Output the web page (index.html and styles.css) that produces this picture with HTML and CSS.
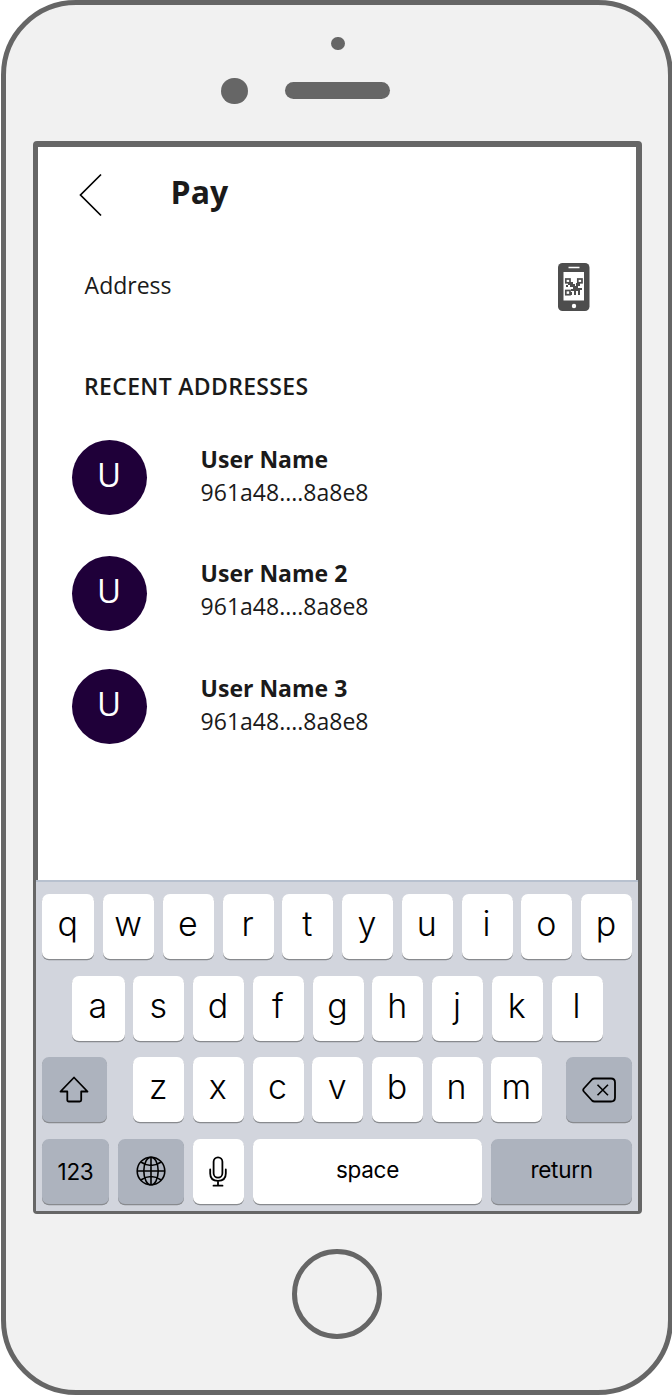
FILE: index.html
```html
<!DOCTYPE html>
<html lang="en">
<head>
<meta charset="utf-8">
<title>Pay</title>
<link rel="stylesheet" href="styles.css">
</head>
<body>
<div class="phone">
  <div class="bezel">
    <div class="sensor"></div>
    <div class="speaker-row"><span class="camera"></span><span class="speaker"></span></div>
  </div>
  <div class="screen">
    <main class="app">
      <header class="header">
        <svg class="back" width="24" height="44" viewBox="0 0 24 44" fill="none" stroke="#000" stroke-width="1.7"><path d="M23 1.500L2.500 22l20.500 20.500"/></svg>
        <h1 class="title">Pay</h1>
      </header>
      <div class="address">
        <span class="address-label">Address</span>
        <svg class="qr" width="32" height="48" viewBox="0 0 32 48">
          <rect width="31.500" height="48" rx="4.500" fill="#4d4d4d"/>
          <rect x="5.500" y="9" width="20.500" height="28.500" fill="#fff"/>
          <path d="M10.500 4.500h11" stroke="#fff" stroke-width="1.500"/>
          <circle cx="16" cy="43" r="2.200" fill="#fff"/>
          <g fill="none" stroke="#4d4d4d" stroke-width="1.700">
            <rect x="7.800" y="16" width="4.200" height="3.800"/>
            <rect x="19.800" y="16" width="4.200" height="3.800"/>
            <rect x="7.800" y="27.500" width="4.200" height="4.200"/>
          </g>
          <path d="M12 19h3v2h2v2h1v-3h2v-1h2v4h-2v2h2v7h-2v-4h-2v4h-2v-4h-3v-2h2v-2h-3v-2h-2v-2h-1v-1h1zM8 22h2v2H8zM22 25h2v2h-2zM12 29h2v3h-2z" fill="#4d4d4d"/>
        </svg>
      </div>
      <h2 class="section">RECENT ADDRESSES</h2>
      <ul class="contacts">
        <li class="contact"><span class="avatar">U</span><div class="details"><b class="name">User Name</b><span class="hash">961a48....8a8e8</span></div></li>
        <li class="contact contact-second"><span class="avatar">U</span><div class="details"><b class="name">User Name 2</b><span class="hash">961a48....8a8e8</span></div></li>
        <li class="contact"><span class="avatar">U</span><div class="details"><b class="name">User Name 3</b><span class="hash">961a48....8a8e8</span></div></li>
      </ul>
    </main>
    <div class="keyboard">
      <div class="row">
        <span class="key key-first">q</span><span class="key">w</span><span class="key">e</span><span class="key">r</span><span class="key">t</span><span class="key">y</span><span class="key">u</span><span class="key">i</span><span class="key">o</span><span class="key">p</span>
      </div>
      <div class="row row-home">
        <span class="key key-first">a</span><span class="key">s</span><span class="key">d</span><span class="key">f</span><span class="key">g</span><span class="key">h</span><span class="key">j</span><span class="key">k</span><span class="key">l</span>
      </div>
      <div class="row">
        <span class="key key-dark shift"><svg width="30" height="27" viewBox="0 0 30 27" fill="none" stroke="#000" stroke-width="1.800" stroke-linejoin="round"><path d="M15 1.500L28.500 15.500h-6.300v8.500q0 1.500-1.500 1.500H9.800q-1.500 0-1.500-1.500v-8.500H1.500z"/></svg></span>
        <span class="key">z</span><span class="key">x</span><span class="key">c</span><span class="key">v</span><span class="key">b</span><span class="key">n</span><span class="key">m</span>
        <span class="key key-dark delete"><svg width="34" height="26" viewBox="0 0 34 26" fill="none" stroke="#000" stroke-width="1.800" stroke-linejoin="round"><path d="M12.500 1.500H29q4 0 4 4v15q0 4-4 4H12.500q-1.500 0-2.500-1L1.800 14.500q-1.200-1.500 0-3L10 2.500q1-1 2.500-1z"/><path d="M15.500 7.800l10.500 10.500m0-10.500L15.500 18.300" stroke-width="1.600"/></svg></span>
      </div>
      <div class="row row-bottom">
        <span class="key key-dark key-word numbers">123</span>
        <span class="key key-dark globe"><svg width="30" height="30" viewBox="0 0 30 30" fill="none" stroke="#000" stroke-width="1.600"><circle cx="15" cy="15" r="13.800"/><ellipse cx="15" cy="15" rx="7.200" ry="13.800"/><path d="M15 1v28M1 15h28M4.800 6Q15 13 25.200 6M4.800 24Q15 17 25.200 24"/></svg></span>
        <span class="key mic"><svg width="18" height="31" viewBox="0 0 18 31" fill="none" stroke="#000" stroke-width="1.800" stroke-linecap="round"><rect x="4.600" y="1.300" width="8.800" height="20.400" rx="4.400"/><path d="M1.200 13.500v4q0 7.300 7.800 7.300t7.800-7.300v-4M9 25v4.700M4.500 29.700h9"/></svg></span>
        <span class="key key-word space">space</span>
        <span class="key key-dark key-word return">return</span>
      </div>
    </div>
  </div>
  <div class="home"></div>
</div>
</body>
</html>
```
FILE: styles.css
```css
* { box-sizing: border-box; }

html { overflow: hidden; }

body {
  margin: 0;
  background: #fff;
  font-family: "Open Sans", "Noto Sans", sans-serif;
  color: #1a1a1a;
}

.phone {
  width: 672px;
  height: 1395px;
  margin-left: 1px;
  border: 5px solid #666;
  border-radius: 75px;
  background: #f1f1f1;
}

.bezel {
  height: 136px;
  padding-top: 31.500px;
}

.sensor {
  width: 13.500px;
  height: 13.500px;
  margin-left: 325px;
  border-radius: 50%;
  background: #666;
}

.speaker-row {
  display: flex;
  align-items: center;
  gap: 37.500px;
  margin: 27.500px 0 0 215px;
}

.camera {
  width: 26.500px;
  height: 26.500px;
  border-radius: 50%;
  background: #666;
}

.speaker {
  width: 105px;
  height: 17px;
  margin-bottom: 1.500px;
  border-radius: 9px;
  background: #666;
}

.screen {
  width: 609px;
  height: 1073px;
  margin-left: 26.600px;
  border: solid #666;
  border-width: 6px 6px 3px 5px;
  border-radius: 4px;
  background: #fff;
}

.app {
  height: 733px;
  padding: 25px 46px 0 34px;
}

.header {
  display: flex;
  height: 46px;
}

.back { margin: 1px 0 0 6px; }

.title {
  margin: -3px 0 0 69px;
  font-size: 32px;
  font-weight: 700;
  line-height: 46px;
}

.address {
  display: flex;
  justify-content: space-between;
  height: 48px;
  margin: 44.500px 0 0 13px;
}

.address-label {
  font-size: 23px;
  line-height: 45px;
}

.section {
  margin: 57px 0 0 12.500px;
  font-size: 23px;
  font-weight: 600;
  line-height: 36px;
  letter-spacing: 0.320px;
}

.contacts {
  display: flex;
  flex-direction: column;
  gap: 39.500px;
  margin: 36px 0 0;
  padding: 0;
  list-style: none;
}

.contact {
  display: flex;
  gap: 54px;
  height: 75px;
}

.avatar {
  width: 75px;
  height: 75px;
  border-radius: 50%;
  background: #1f0039;
  color: #fff;
  font-size: 33px;
  line-height: 69px;
  text-align: center;
}

.contact-second .avatar { margin-top: 1.500px; }

.details {
  display: flex;
  flex-direction: column;
  padding-top: 3px;
  font-size: 23px;
  line-height: 33px;
  white-space: nowrap;
}

.name { font-weight: 700; }

.keyboard {
  display: flex;
  flex-direction: column;
  gap: 16.500px;
  height: 331px;
  margin: 0 -2px;
  padding: 12px 5.500px 0 6.400px;
  border-top: 2px solid #b8c1cf;
  background: #d2d5dd;
  color: #000;
  font-family: Inter, "Liberation Sans", sans-serif;
}

.row {
  display: flex;
  justify-content: space-between;
  height: 65px;
}

.row-home { padding: 0 29.500px 0 30.300px; }

.row-bottom {
  justify-content: flex-start;
  gap: 8.700px;
}

.key {
  display: flex;
  align-items: center;
  justify-content: center;
  width: 51px;
  height: 65px;
  padding: 0 1px 6px 0;
  border-radius: 7px;
  background: #fff;
  box-shadow: 0 1.300px 0 #888a8e;
  font-size: 34px;
  font-weight: 350;
}

.key-first { width: 52.300px; }

.key-dark { background: #adb3be; }

.shift { width: 65px; margin-right: 17.500px; padding: 0; }

.delete { width: 65.500px; margin-left: 15.500px; padding: 0; }

.key-word {
  padding: 0 0 3px;
  font-size: 22.500px;
  font-weight: 400;
  letter-spacing: -0.300px;
}

.numbers { width: 67px; padding: 0; }

.globe { width: 66.500px; padding: 0; }

.mic { padding: 0; }

.space { width: 230px; }

.return { width: 141px; }

.home {
  width: 90px;
  height: 90px;
  margin: 35px 0 0 286px;
  border: 5.500px solid #666;
  border-radius: 50%;
}
```
